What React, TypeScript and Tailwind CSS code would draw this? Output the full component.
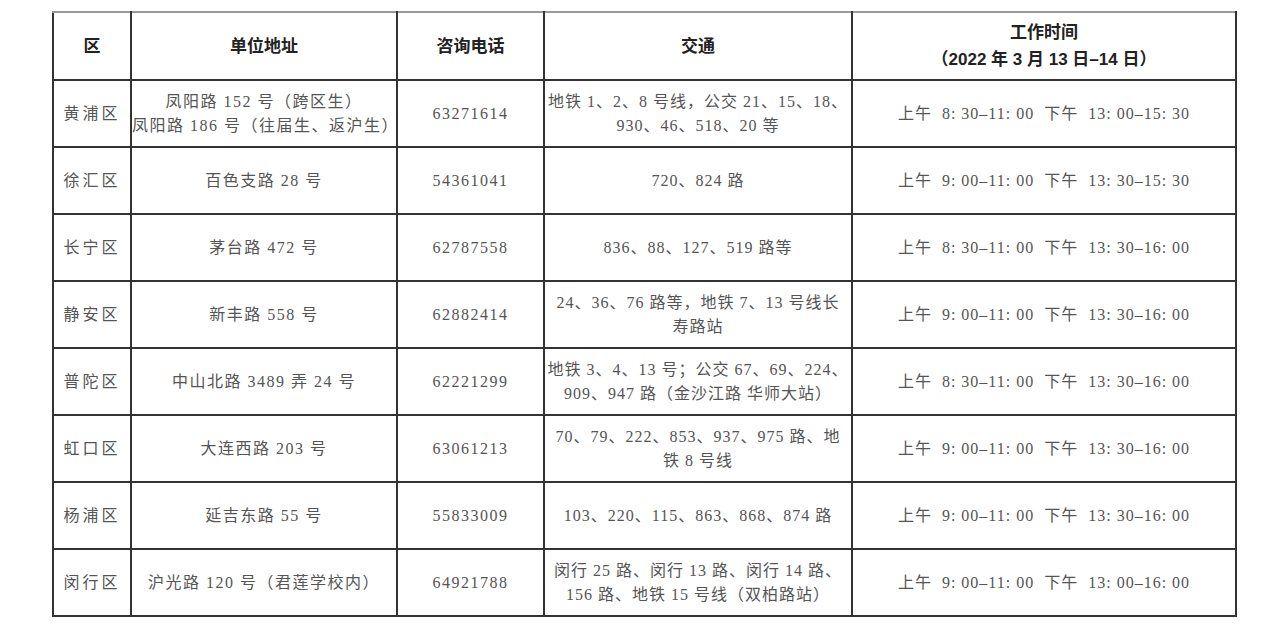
type Row = {
  district: string;
  address: string[];
  phone: string;
  transit: string[];
  hours: string;
};

const rows: Row[] = [
  {
    district: "黄浦区",
    address: ["凤阳路 152 号（跨区生）", "凤阳路 186 号（往届生、返沪生）"],
    phone: "63271614",
    transit: ["地铁 1、2、8 号线，公交 21、15、18、", "930、46、518、20 等"],
    hours: "上午  8: 30–11: 00  下午  13: 00–15: 30",
  },
  {
    district: "徐汇区",
    address: ["百色支路 28 号"],
    phone: "54361041",
    transit: ["720、824 路"],
    hours: "上午  9: 00–11: 00  下午  13: 30–15: 30",
  },
  {
    district: "长宁区",
    address: ["茅台路 472 号"],
    phone: "62787558",
    transit: ["836、88、127、519 路等"],
    hours: "上午  8: 30–11: 00  下午  13: 30–16: 00",
  },
  {
    district: "静安区",
    address: ["新丰路 558 号"],
    phone: "62882414",
    transit: ["24、36、76 路等，地铁 7、13 号线长", "寿路站"],
    hours: "上午  9: 00–11: 00  下午  13: 30–16: 00",
  },
  {
    district: "普陀区",
    address: ["中山北路 3489 弄 24 号"],
    phone: "62221299",
    transit: ["地铁 3、4、13 号；公交 67、69、224、", "909、947 路（金沙江路 华师大站）"],
    hours: "上午  8: 30–11: 00  下午  13: 30–16: 00",
  },
  {
    district: "虹口区",
    address: ["大连西路 203 号"],
    phone: "63061213",
    transit: ["70、79、222、853、937、975 路、地", "铁 8 号线"],
    hours: "上午  9: 00–11: 00  下午  13: 30–16: 00",
  },
  {
    district: "杨浦区",
    address: ["延吉东路 55 号"],
    phone: "55833009",
    transit: ["103、220、115、863、868、874 路"],
    hours: "上午  9: 00–11: 00  下午  13: 30–16: 00",
  },
  {
    district: "闵行区",
    address: ["沪光路 120 号（君莲学校内）"],
    phone: "64921788",
    transit: ["闵行 25 路、闵行 13 路、闵行 14 路、", "156 路、地铁 15 号线（双柏路站）"],
    hours: "上午  9: 00–11: 00  下午  13: 00–16: 00",
  },
];

const bodyFont =
  "font-['Liberation_Serif','Noto_Sans_CJK_SC',serif] text-[#555] text-[16px] leading-[24px] tracking-[1.5px]";
const headFont =
  "font-['Liberation_Sans','Noto_Sans_CJK_SC',sans-serif] font-bold text-[#222] text-[17px] leading-[27px]";

function Lines({ lines }: { lines: string[] }) {
  return (
    <>
      {lines.map((l, i) => (
        <div key={i} className="whitespace-nowrap">
          {l}
        </div>
      ))}
    </>
  );
}

export default function App() {
  return (
    <div className="w-[1269px] h-[630px] bg-white pt-[11px] pl-[52px]">
      <table className="table-fixed border-collapse w-[1183px]">
        <colgroup>
          <col className="w-[78px]" />
          <col className="w-[266px]" />
          <col className="w-[147px]" />
          <col className="w-[308px]" />
          <col className="w-[384px]" />
        </colgroup>
        <thead>
          <tr className={`h-[68px] ${headFont}`}>
            <th className="border-2 border-[#333] border-t-[#999] text-center font-bold">区</th>
            <th className="border-2 border-[#333] border-t-[#999] text-center font-bold">单位地址</th>
            <th className="border-2 border-[#333] border-t-[#999] text-center font-bold">咨询电话</th>
            <th className="border-2 border-[#333] border-t-[#999] text-center font-bold">交通</th>
            <th className="border-2 border-[#333] border-t-[#999] text-center font-bold">
              <div>工作时间</div>
              <div>（2022 年 3 月 13 日–14 日）</div>
            </th>
          </tr>
        </thead>
        <tbody className={bodyFont}>
          {rows.map((r) => (
            <tr key={r.district} className="h-[67px]">
              <td className="border-2 border-[#333] text-center tracking-[3px]">{r.district}</td>
              <td className="border-2 border-[#333] text-center">
                <Lines lines={r.address} />
              </td>
              <td className="border-2 border-[#333] text-center">{r.phone}</td>
              <td className="border-2 border-[#333] text-center tracking-[1px]">
                <Lines lines={r.transit} />
              </td>
              <td className="border-2 border-[#333] text-center whitespace-pre tracking-[1px]">
                {r.hours}
              </td>
            </tr>
          ))}
        </tbody>
      </table>
    </div>
  );
}
